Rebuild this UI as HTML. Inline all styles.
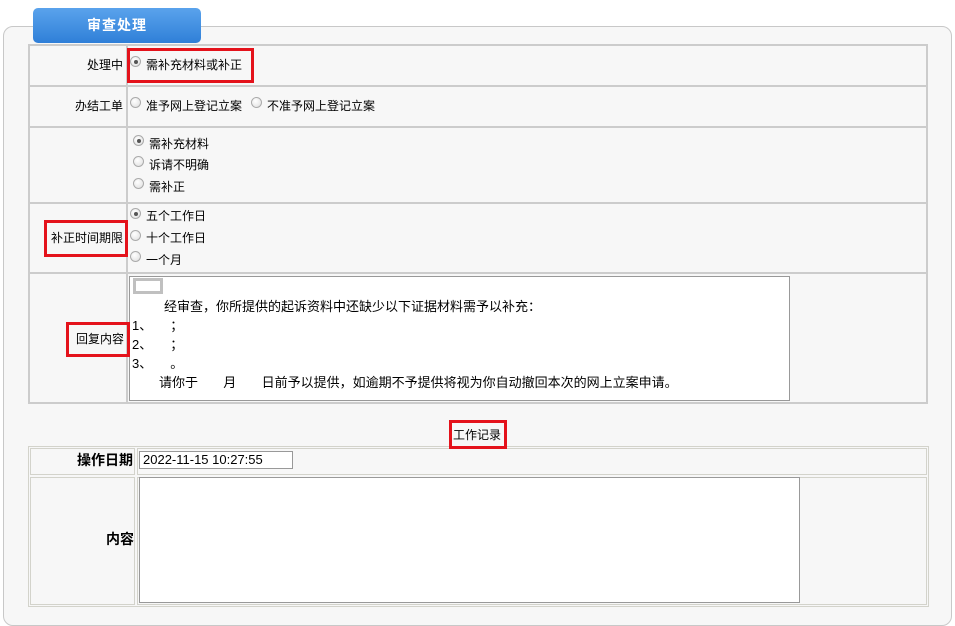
<!DOCTYPE html>
<html><head><meta charset="utf-8"><style>
*{box-sizing:border-box;margin:0;padding:0}
body{width:955px;height:626px;background:#fff;font-family:"Liberation Sans","Noto Sans CJK SC",sans-serif;font-size:12px;color:#000;position:relative;overflow:hidden}
.a{position:absolute}
.panel{left:3px;top:26px;width:949px;height:600px;border:1px solid #c8c8c8;border-radius:10px;background:#f7f7f7}
.tab{left:33px;top:8px;width:168px;height:35px;border-radius:5px;background:linear-gradient(#5aa3ec,#2f7fd8);color:#fff;font-weight:bold;font-size:14px;text-align:center;line-height:35px;letter-spacing:1px}
.hl{background:#ccc}
.vl{background:#ccc}
.r{width:11px;height:11px;border-radius:50%;border:1px solid #aaa;background:radial-gradient(circle at 40% 35%,#fff,#ddd)}
.r.c::after{content:"";position:absolute;left:2.5px;top:2.5px;width:4px;height:4px;border-radius:50%;background:#555}
.red{border:3px solid #e4121b}
.t{white-space:nowrap;line-height:14px}
.ta{background:#fff;border:1px solid #999}
.cell{border:1px solid #d3d3cb}
.x{font-size:13px}
</style></head><body>
<div class="a panel"></div>
<div class="a tab">审查处理</div>

<div class="a" style="left:28px;top:44px;width:900px;height:360px;border:2px solid #ccc"></div>
<div class="a hl" style="left:28px;top:85px;width:900px;height:2px"></div>
<div class="a hl" style="left:28px;top:126px;width:900px;height:2px"></div>
<div class="a hl" style="left:28px;top:202px;width:900px;height:2px"></div>
<div class="a hl" style="left:28px;top:272px;width:900px;height:2px"></div>
<div class="a vl" style="left:126px;top:44px;width:2px;height:360px"></div>

<div class="a t" style="left:87px;top:58px">处理中</div>
<div class="a r c" style="left:130px;top:56px"></div>
<div class="a t" style="left:146px;top:58px">需补充材料或补正</div>
<div class="a red" style="left:127px;top:48px;width:127px;height:35px"></div>

<div class="a t" style="left:75px;top:99px">办结工单</div>
<div class="a r" style="left:130px;top:97px"></div>
<div class="a t" style="left:146px;top:99px">准予网上登记立案</div>
<div class="a r" style="left:251px;top:97px"></div>
<div class="a t" style="left:267px;top:99px">不准予网上登记立案</div>

<div class="a r c" style="left:133px;top:135px"></div>
<div class="a t" style="left:149px;top:137px">需补充材料</div>
<div class="a r" style="left:133px;top:156px"></div>
<div class="a t" style="left:149px;top:158px">诉请不明确</div>
<div class="a r" style="left:133px;top:178px"></div>
<div class="a t" style="left:149px;top:180px">需补正</div>

<div class="a r c" style="left:130px;top:208px"></div>
<div class="a t" style="left:146px;top:209px">五个工作日</div>
<div class="a r" style="left:130px;top:230px"></div>
<div class="a t" style="left:146px;top:231px">十个工作日</div>
<div class="a r" style="left:130px;top:251px"></div>
<div class="a t" style="left:146px;top:253px">一个月</div>
<div class="a t" style="left:51px;top:231px">补正时间期限</div>
<div class="a red" style="left:44px;top:220px;width:84px;height:37px"></div>

<div class="a ta" style="left:129px;top:276px;width:661px;height:125px"></div>
<div class="a" style="left:133px;top:278px;width:30px;height:16px;border:3px solid #c0c0c0;background:#fff"></div>
<div class="a t x" style="left:164px;top:300px">经审查，你所提供的起诉资料中还缺少以下证据材料需予以补充：</div>
<div class="a t x" style="left:132px;top:319px">1、&nbsp;&nbsp;&nbsp;&nbsp;&nbsp;；</div>
<div class="a t x" style="left:132px;top:338px">2、&nbsp;&nbsp;&nbsp;&nbsp;&nbsp;；</div>
<div class="a t x" style="left:132px;top:357px">3、&nbsp;&nbsp;&nbsp;&nbsp;&nbsp;。</div>
<div class="a t x" style="left:159px;top:376px">请你于&nbsp;&nbsp;&nbsp;&nbsp;&nbsp;&nbsp;&nbsp;月&nbsp;&nbsp;&nbsp;&nbsp;&nbsp;&nbsp;&nbsp;日前予以提供，如逾期不予提供将视为你自动撤回本次的网上立案申请。</div>
<div class="a t" style="left:76px;top:332px">回复内容</div>
<div class="a red" style="left:66px;top:322px;width:64px;height:35px"></div>

<div class="a cell" style="left:28px;top:446px;width:901px;height:161px"></div>
<div class="a cell" style="left:30px;top:448px;width:105px;height:27px"></div>
<div class="a cell" style="left:137px;top:448px;width:790px;height:27px"></div>
<div class="a cell" style="left:30px;top:477px;width:105px;height:128px"></div>
<div class="a cell" style="left:137px;top:477px;width:790px;height:128px"></div>

<div class="a t" style="left:453px;top:428px;background:#f7f7f7">工作记录</div>
<div class="a red" style="left:449px;top:420px;width:58px;height:29px"></div>

<div class="a t" style="left:77px;top:453px;font-weight:bold;font-size:14px">操作日期</div>
<div class="a ta t" style="left:139px;top:451px;width:154px;height:18px;font-size:13px;padding:1px 3px">2022-11-15 10:27:55</div>
<div class="a t" style="left:106px;top:532px;font-weight:bold;font-size:14px">内容</div>
<div class="a ta" style="left:139px;top:477px;width:661px;height:126px"></div>
</body></html>
